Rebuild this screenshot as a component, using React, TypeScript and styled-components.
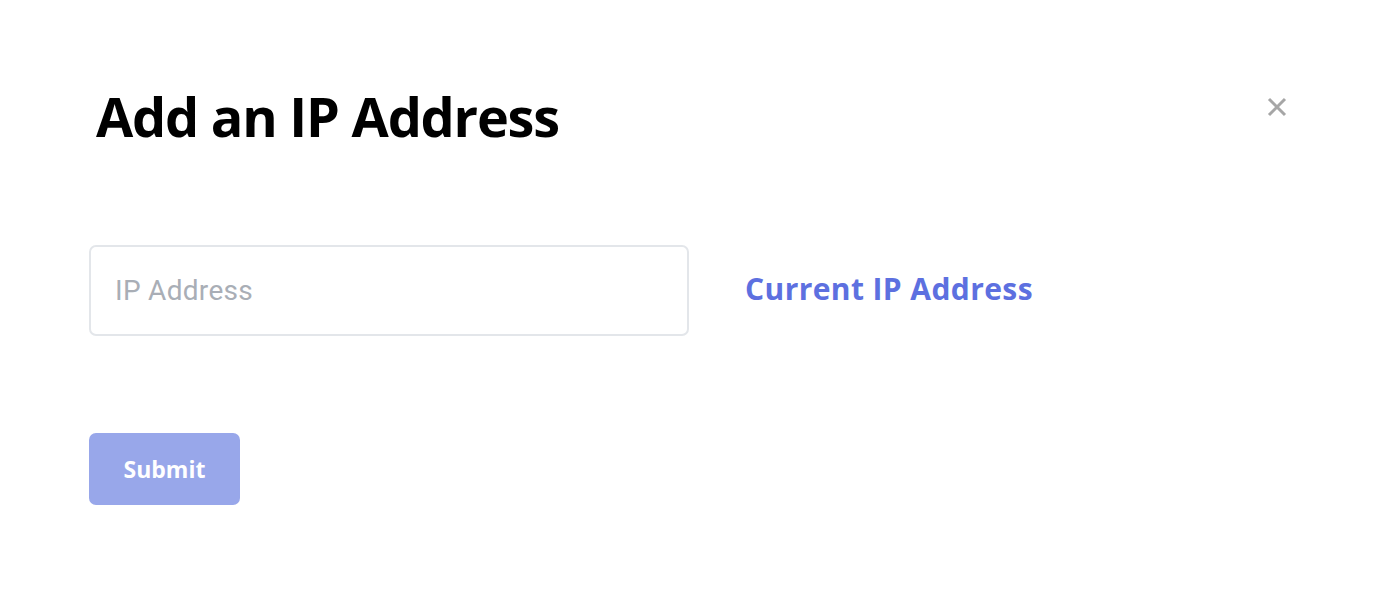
import styled, { createGlobalStyle } from "styled-components"

const GlobalStyle = createGlobalStyle`
    html, body {
        margin: 0;
        padding: 0;
        background: #ffffff;
    }
    body {
        font-family: "Open Sans", Lato, sans-serif;
    }
`

const Modal = styled.div`
    width: 1384px;
    height: 592px;
    box-sizing: border-box;
    padding: 86px 89px 0 89px;
    display: flex;
    flex-direction: column;
`

const Header = styled.div`
    display: flex;
    justify-content: space-between;
    align-items: flex-start;
`

const Title = styled.h1`
    margin: 0 0 0 7px;
    font-size: 54px;
    font-weight: 700;
    line-height: 60px;
    letter-spacing: -1.2px;
    color: #000;
`

const CloseButton = styled.button`
    margin: 9px 6px 0 0;
    width: 24px;
    height: 24px;
    padding: 0;
    border: none;
    background: none;
    cursor: pointer;
    display: flex;
    align-items: center;
    justify-content: center;
`

const Row = styled.div`
    display: flex;
    align-items: center;
    gap: 56px;
    margin-top: 99px;
`

const Input = styled.input`
    width: 600px;
    height: 91px;
    box-sizing: border-box;
    border: 2px solid #e3e6ea;
    border-radius: 7px;
    padding: 0 24px;
    font-family: Roboto, sans-serif;
    font-size: 28px;
    letter-spacing: 0.3px;
    color: #333;
    outline: none;

    &::placeholder {
        color: #a9aeb6;
    }
`

const LinkButton = styled.a`
    font-size: 30px;
    font-weight: 700;
    letter-spacing: 0.4px;
    color: #5d70e0;
    text-decoration: none;
    cursor: pointer;
    margin-top: -4px;
`

const SubmitButton = styled.button`
    margin-top: 97px;
    align-self: flex-start;
    width: 151px;
    height: 72px;
    border: none;
    border-radius: 7px;
    background: #98a7ea;
    color: #fff;
    font-family: "Open Sans", Lato, sans-serif;
    font-size: 23px;
    font-weight: 700;
    cursor: pointer;
`

export default function App() {
    return (
        <>
            <GlobalStyle />
            <Modal>
                <Header>
                    <Title>Add an IP Address</Title>
                    <CloseButton aria-label="Close">
                        <svg width="20" height="20" viewBox="0 0 20 20">
                            <path d="M2 2 L18 18 M18 2 L2 18" stroke="#a6a6a6" strokeWidth="3" strokeLinecap="butt" />
                        </svg>
                    </CloseButton>
                </Header>
                <Row>
                    <Input placeholder="IP Address" />
                    <LinkButton>Current IP Address</LinkButton>
                </Row>
                <SubmitButton>Submit</SubmitButton>
            </Modal>
        </>
    )
}
